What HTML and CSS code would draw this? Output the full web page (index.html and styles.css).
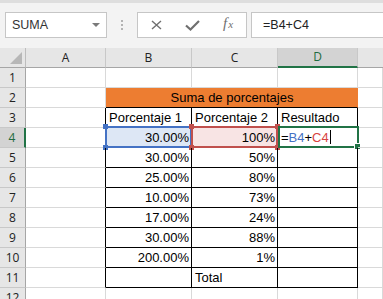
FILE: index.html
```html
<!DOCTYPE html>
<html>
<head>
<meta charset="utf-8">
<link rel="stylesheet" href="styles.css">
</head>
<body>
<div class="toolbar">
  <div class="namebox">
    <span class="nb-text">SUMA</span>
    <svg class="nb-arrow" width="8" height="4" viewBox="0 0 8 4"><polygon points="0,0 8,0 4,4" fill="#7a7a7a"/></svg>
  </div>
  <div class="sep">
    <svg width="3" height="12" viewBox="0 0 3 12"><rect x="0" y="0" width="2" height="2" fill="#b3b3b3"/><rect x="0" y="4" width="2" height="2" fill="#b3b3b3"/><rect x="0" y="8" width="2" height="2" fill="#b3b3b3"/></svg>
  </div>
  <div class="fbtns">
    <div class="fbtn">
      <svg width="11" height="10" viewBox="0 0 11 10"><path d="M1 1 L10 9 M10 1 L1 9" stroke="#6f6f6f" stroke-width="1.4" fill="none"/></svg>
    </div>
    <div class="fbtn">
      <svg width="15" height="11" viewBox="0 0 15 11"><path d="M1 5.5 L5.5 9.5 L14 1" stroke="#6f6f6f" stroke-width="2.2" fill="none"/></svg>
    </div>
    <div class="fbtn fx"><span class="fx-f">f</span><span class="fx-x">x</span></div>
  </div>
  <div class="formula">=B4+C4</div>
</div>

<div class="sheet">
  <!-- header row -->
  <div class="corner"><svg width="12" height="12" viewBox="0 0 12 12"><polygon points="12,0 12,12 0,12" fill="#b7b7b7"/></svg></div>
  <div class="ch">A</div>
  <div class="ch">B</div>
  <div class="ch">C</div>
  <div class="ch ch-sel">D</div>
  <div class="ch ch-last"></div>

  <!-- row 1 -->
  <div class="rh">1</div>
  <div class="c"></div><div class="c"></div><div class="c"></div><div class="c"></div><div class="c"></div>

  <!-- row 2 -->
  <div class="rh">2</div>
  <div class="c"></div>
  <div class="c title">Suma de porcentajes</div>
  <div class="c"></div>

  <!-- row 3 -->
  <div class="rh">3</div>
  <div class="c tl"></div>
  <div class="c t">Porcentaje 1</div>
  <div class="c t">Porcentaje 2</div>
  <div class="c t">Resultado</div>
  <div class="c"></div>

  <!-- row 4 -->
  <div class="rh rh-sel">4</div>
  <div class="c tl"></div>
  <div class="c t num ref-b">30.00%
    <div class="hl hl-blue"><i class="hd tl-h"></i><i class="hd bl-h"></i></div>
  </div>
  <div class="c t num ref-c">100%
    <div class="hl hl-red"><i class="hd tl-h"></i><i class="hd bl-h"></i><i class="hd tr-h"></i><i class="hd br-h"></i></div>
  </div>
  <div class="c t active"><span class="k">=</span><span class="rb">B4</span><span class="k">+</span><span class="rc">C4</span><span class="caret"></span>
    <div class="hl hl-green"><i class="hd br-h"></i></div>
  </div>
  <div class="c"></div>

  <!-- row 5 -->
  <div class="rh">5</div>
  <div class="c tl"></div>
  <div class="c t num">30.00%</div>
  <div class="c t num">50%</div>
  <div class="c t"></div>
  <div class="c"></div>

  <!-- row 6 -->
  <div class="rh">6</div>
  <div class="c tl"></div>
  <div class="c t num">25.00%</div>
  <div class="c t num">80%</div>
  <div class="c t"></div>
  <div class="c"></div>

  <!-- row 7 -->
  <div class="rh">7</div>
  <div class="c tl"></div>
  <div class="c t num">10.00%</div>
  <div class="c t num">73%</div>
  <div class="c t"></div>
  <div class="c"></div>

  <!-- row 8 -->
  <div class="rh">8</div>
  <div class="c tl"></div>
  <div class="c t num">17.00%</div>
  <div class="c t num">24%</div>
  <div class="c t"></div>
  <div class="c"></div>

  <!-- row 9 -->
  <div class="rh">9</div>
  <div class="c tl"></div>
  <div class="c t num">30.00%</div>
  <div class="c t num">88%</div>
  <div class="c t"></div>
  <div class="c"></div>

  <!-- row 10 -->
  <div class="rh">10</div>
  <div class="c tl"></div>
  <div class="c t num">200.00%</div>
  <div class="c t num">1%</div>
  <div class="c t"></div>
  <div class="c"></div>

  <!-- row 11 -->
  <div class="rh">11</div>
  <div class="c tl"></div>
  <div class="c t"></div>
  <div class="c t">Total</div>
  <div class="c t"></div>
  <div class="c"></div>

  <!-- row 12 -->
  <div class="rh">12</div>
  <div class="c"></div><div class="c"></div><div class="c"></div><div class="c"></div><div class="c"></div>
</div>
</body>
</html>
```

FILE: styles.css
```css
html, body {
  margin: 0;
  padding: 0;
  width: 383px;
  height: 299px;
  overflow: hidden;
  background: #ffffff;
}

body {
  font-family: "Liberation Sans", Arial, sans-serif;
}

/* ---------- toolbar ---------- */
.toolbar {
  height: 48px;
  box-sizing: border-box;
  background: #f3f3f3;
  border-top: 3px solid #dedede;
  padding-top: 9px;
  display: flex;
  align-items: flex-start;
}

.namebox {
  margin-left: 5px;
  width: 102px;
  height: 26px;
  box-sizing: border-box;
  background: #fff;
  border: 1px solid #c6c6c6;
  display: flex;
  align-items: center;
  padding-left: 6px;
  padding-right: 6px;
}

.nb-text {
  font-size: 12.5px;
  color: #333;
  flex: 1;
}

.nb-arrow {
  display: block;
}

.sep {
  width: 30px;
  height: 26px;
  display: flex;
  align-items: center;
  justify-content: center;
  padding-top: 1px;
  box-sizing: border-box;
}

.fbtns {
  width: 110px;
  height: 26px;
  box-sizing: border-box;
  background: #fff;
  border: 1px solid #c6c6c6;
  display: flex;
}

.fbtn {
  width: 36px;
  height: 24px;
  display: flex;
  align-items: center;
  justify-content: center;
}

.fx {
  font-family: "Liberation Serif", "DejaVu Serif", serif;
  font-style: italic;
  color: #6f6f6f;
  font-size: 15px;
  align-items: baseline;
  padding-top: 2px;
  box-sizing: border-box;
}

.fx-x {
  font-size: 11px;
  margin-left: 1px;
}

.formula {
  margin-left: 4px;
  flex: 1;
  height: 26px;
  box-sizing: border-box;
  background: #fff;
  border: 1px solid #c6c6c6;
  border-right: none;
  font-size: 12.5px;
  color: #222;
  padding-left: 11px;
  line-height: 24px;
}

/* ---------- sheet ---------- */
.sheet {
  display: grid;
  grid-template-columns: 26px 80px 86px 86px 80px 1fr;
  grid-template-rows: 20px repeat(12, 20px);
}

.corner, .ch, .rh, .c {
  box-sizing: border-box;
}

.corner {
  background: #e6e6e6;
  border-right: 1px solid #bdbdbd;
  border-bottom: 1px solid #a6a6a6;
  display: flex;
  align-items: flex-end;
  justify-content: flex-end;
  padding: 0 3px 3px 0;
}

.corner svg {
  display: block;
}

.ch {
  background: #e6e6e6;
  border-right: 1px solid #c8c8c8;
  border-bottom: 1px solid #a6a6a6;
  font-family: "Open Sans", "Liberation Sans", sans-serif;
  font-size: 12px;
  color: #222;
  text-align: center;
  line-height: 19px;
}

.ch-sel {
  background: #d3d3d3;
  border-bottom: 2px solid #217346;
  color: #1e6b40;
  line-height: 18px;
}

.ch-last {
  border-right: none;
}

.rh {
  background: #e6e6e6;
  border-right: 1px solid #a6a6a6;
  border-bottom: 1px solid #c8c8c8;
  font-family: "Open Sans", "Liberation Sans", sans-serif;
  font-size: 12px;
  color: #222;
  text-align: center;
  line-height: 19px;
}

.rh-sel {
  background: #d3d3d3;
  border-right: 2px solid #217346;
  color: #1e6b40;
}

.c {
  border-right: 1px solid #d9d9d9;
  border-bottom: 1px solid #d9d9d9;
  font-size: 13px;
  color: #000;
  line-height: 19px;
  padding: 0 2px 0 3px;
  white-space: nowrap;
  overflow: visible;
  position: relative;
}

.title {
  grid-column: span 3;
  background: #ed7d31;
  border-right-color: #ed7d31;
  border-bottom: 1px solid #000;
  text-align: center;
}

.t {
  border-right: 1px solid #000;
  border-bottom: 1px solid #000;
}

.tl {
  border-right: 1px solid #000;
}

.num {
  text-align: right;
}

.ref-b {
  background: #dde7f5;
}

.ref-c {
  background: #f8e4e4;
}

.rb { color: #4472c4; }
.rc { color: #d9433f; }
.k { color: #000; }

.caret {
  display: inline-block;
  width: 1px;
  height: 14px;
  background: #000;
  vertical-align: -2px;
  margin-left: 1px;
}

/* selection / reference highlight boxes overlaying cells */
.hl {
  position: absolute;
  left: -1px;
  top: -2px;
  right: -1px;
  bottom: -1px;
  border: 2px solid;
  box-sizing: border-box;
}

.hl-blue { border-color: #4472c4; }
.hl-red { border-color: #c0504d; }
.hl-green { border-color: #217346; left: 0; right: -2px; }

.hd {
  position: absolute;
  width: 5px;
  height: 5px;
}

.hl-blue .hd { background: #4472c4; }
.hl-red .hd { background: #c0504d; }
.hl-green .hd { background: #217346; border: 1px solid #fff; width: 5px; height: 5px; }

.tl-h { left: -4px; top: -4px; }
.bl-h { left: -4px; bottom: -4px; }
.tr-h { right: -4px; top: -4px; }
.br-h { right: -4px; bottom: -4px; }
```
